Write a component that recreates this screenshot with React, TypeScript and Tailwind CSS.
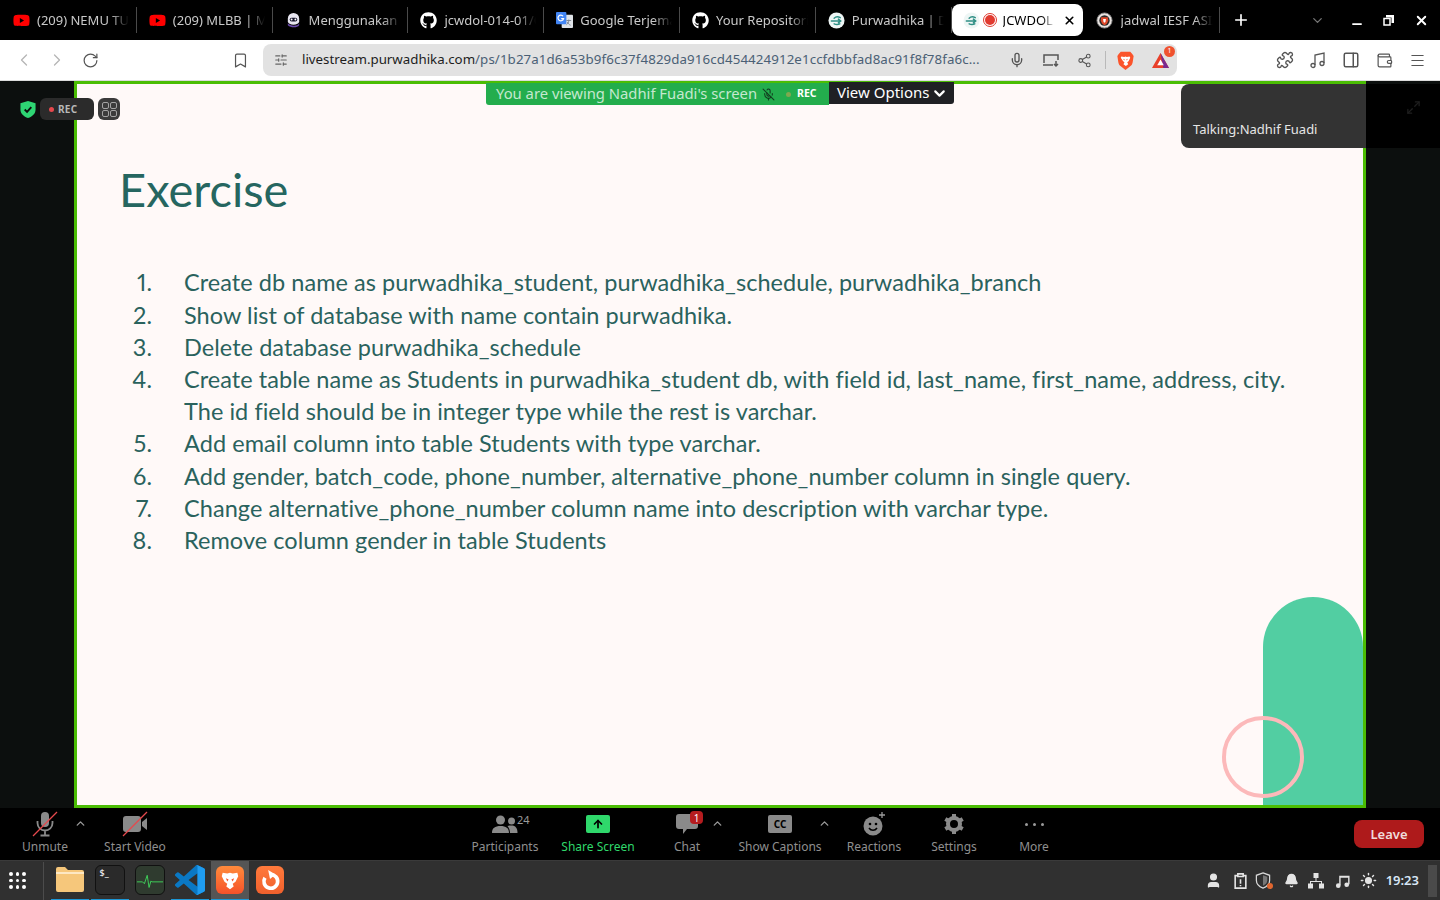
import {
  ArrowUp,
  Bell,
  Bookmark,
  ChevronDown,
  ChevronLeft,
  ChevronRight,
  ChevronUp,
  Maximize2,
  Menu,
  Mic,
  MicOff,
  Minus,
  PanelRight,
  Plus,
  Puzzle,
  RotateCw,
  Share2,
  SlidersHorizontal,
  Sun,
  User,
  Wallet,
  X,
} from "lucide-react";
import { FaGithub, FaYoutube } from "react-icons/fa";

const ui = "font-['Noto_Sans',sans-serif]";

interface Tab {
  title: string;
  icon: string;
}

const tabs: Tab[] = [
  { title: "(209) NEMU TURNAMEN", icon: "yt" },
  { title: "(209) MLBB | MPL ID", icon: "yt" },
  { title: "Menggunakan Chat", icon: "bot" },
  { title: "jcwdol-014-01/Class", icon: "gh" },
  { title: "Google Terjemahan", icon: "gt" },
  { title: "Your Repositories", icon: "gh" },
  { title: "Purwadhika | Dashboard", icon: "pw" },
];

const steps = [
  ["1.", "Create db name as purwadhika_student, purwadhika_schedule, purwadhika_branch"],
  ["2.", "Show list of database with name contain purwadhika."],
  ["3.", "Delete database purwadhika_schedule"],
  ["4.", "Create table name as Students in purwadhika_student db, with field id, last_name, first_name, address, city."],
  ["", "The id field should be in integer type while the rest is varchar."],
  ["5.", "Add email column into table Students with type varchar."],
  ["6.", "Add gender, batch_code, phone_number, alternative_phone_number column in single query."],
  ["7.", "Change alternative_phone_number column name into description with varchar type."],
  ["8.", "Remove column gender in table Students"],
];

function PurwadhikaIcon() {
  return (
    <svg viewBox="0 0 18 18" className="h-[17px] w-[17px] shrink-0">
      <circle cx="9" cy="9" r="8.5" fill="#eef6f5" />
      <path d="M3.500 9.500h8M6.500 6.500c2-2 4-2 6.500-.5M6.500 12.500c2 1 4 1 6 0M11 7.500l2.500 2-2.500 2" stroke="#2f8f85" strokeWidth="1.500" fill="none" strokeLinecap="round" />
    </svg>
  );
}

function TabIcon({ kind }: { kind: string }) {
  if (kind === "yt") return <FaYoutube className="h-[17px] w-[17px] shrink-0 text-[#ff0000]" />;
  if (kind === "gh") return <FaGithub className="h-[17px] w-[17px] shrink-0 text-white" />;
  if (kind === "pw") return <PurwadhikaIcon />;
  if (kind === "gt")
    return (
      <svg viewBox="0 0 18 18" className="h-[17px] w-[17px] shrink-0">
        <rect x="6" y="3" width="12" height="14" rx="1" fill="#dfe3e8" />
        <rect x="0" y="0" width="11" height="13" rx="1" fill="#4285f4" />
        <path d="M7.500 4.500a3 3 0 1 0 .5 2.500H5.500" stroke="#fff" strokeWidth="1.300" fill="none" />
        <path d="M11 9h5M13.500 8v1c0 2-1 3.500-2.500 4.500M12 10.500c.5 1.500 2 3 3.500 3.500" stroke="#7d8590" strokeWidth="1" fill="none" />
      </svg>
    );
  return (
    <svg viewBox="0 0 18 18" className="h-[17px] w-[17px] shrink-0">
      <path d="M3 7a6 6 0 0 1 12 0v3a6 3.500 0 0 1-12 0z" fill="#e8e6f0" />
      <path d="M3 12c2 3 10 4 12 0v2c-2 3-9 3-12 0z" fill="#6d4bb0" />
      <rect x="5" y="6" width="8" height="4" rx="2" fill="#15132a" />
      <circle cx="7" cy="8" r="1" fill="#fff" />
      <circle cx="11" cy="8" r="1" fill="#fff" />
    </svg>
  );
}

function BraveShield({ className }: { className: string }) {
  return (
    <svg viewBox="0 0 24 28" className={className}>
      <path d="M5 1h14l3 3.500 2 3-1.500 9.500c-.5 3-2 4.500-4 6L12 28l-6.500-5c-2-1.500-3.500-3-4-6L0 7.500l2-3z" fill="#fb542b" />
      <path d="M6 8l4 1 2-1 2 1 4-1 1 2-2.500 5-2 1.500 1.500 3-3.500 2.500-3.500-2.500 1.500-3-2-1.500L5 10z" fill="#fff" />
      <path d="M8.500 11.500l2.500 1-1 1.500zM15.500 11.500l-2.500 1 1 1.500z" fill="#fb542b" />
    </svg>
  );
}

function TabBar() {
  return (
    <div className={`flex h-10 items-center bg-black pl-px text-[13px] text-[#c9c9c9] ${ui}`}>
      {tabs.map((t) => (
        <div key={t.title} className="flex h-[26px] w-[135.800px] items-center border-r border-[#4a4a4a] pl-3">
          <TabIcon kind={t.icon} />
          <span className="ml-[7px] w-[92px] overflow-hidden whitespace-nowrap pt-px [mask-image:linear-gradient(to_right,black_80%,transparent)]">
            {t.title}
          </span>
        </div>
      ))}
      <div className="flex h-8 w-[131px] items-center rounded-lg bg-white pl-[11px] text-black">
        <PurwadhikaIcon />
        <span className="ml-[3px] flex h-[14px] w-[14px] shrink-0 items-center justify-center rounded-full border border-[#e13b30]">
          <span className="h-[10px] w-[10px] rounded-full bg-[#e13b30]" />
        </span>
        <span className="ml-[6px] w-[52px] overflow-hidden whitespace-nowrap pt-px [mask-image:linear-gradient(to_right,black_75%,transparent)]">
          JCWDOL 014
        </span>
        <X className="ml-[8px] h-[13px] w-[13px]" strokeWidth={3} />
      </div>
      <div className="flex h-[26px] w-[137px] items-center border-r border-[#4a4a4a] pl-[13px]">
        <svg viewBox="0 0 18 18" className="h-[17px] w-[17px] shrink-0">
          <circle cx="9" cy="9" r="8" fill="#e9e3e0" stroke="#8a8a8a" strokeWidth="1" />
          <circle cx="9" cy="9" r="5.500" fill="#2b2b2b" />
          <path d="M5.500 5.500h7l.5 3.500c-.5 2.500-2 4-4 5-2-1-3.500-2.500-4-5z" fill="#e0492a" />
          <path d="M7.500 7.500h3l-.5 3-1 1-1-1z" fill="#fff" />
        </svg>
        <span className="ml-[8px] w-[92px] overflow-hidden whitespace-nowrap pt-px [mask-image:linear-gradient(to_right,black_80%,transparent)]">
          jadwal IESF ASIA
        </span>
      </div>
      <Plus className="ml-[12px] h-[18px] w-[18px] text-white" strokeWidth={2.2} />
      <ChevronDown className="ml-[60px] h-[15px] w-[15px] text-[#777]" />
      <Minus className="ml-[25px] mt-2 h-[14px] w-[14px] text-white" strokeWidth={3} />
      <svg viewBox="0 0 12 12" className="ml-[19px] h-[12px] w-[12px]">
        <path d="M3 1h8v8H8.500V3.500H3z" fill="#fff" />
        <rect x="1" y="4.500" width="6" height="6.500" fill="none" stroke="#fff" strokeWidth="1.500" />
      </svg>
      <X className="ml-[19px] h-[15px] w-[15px] text-white" strokeWidth={3} />
    </div>
  );
}

function AddressBar() {
  return (
    <div className={`flex h-[41px] items-center border-b border-[#dcdcdc] bg-white text-[#555] ${ui}`}>
      <ChevronLeft className="ml-[14px] h-5 w-5 text-[#b5b5b5]" strokeWidth={1.5} />
      <ChevronRight className="ml-[13px] h-5 w-5 text-[#b5b5b5]" strokeWidth={1.5} />
      <RotateCw className="ml-[15px] h-[17px] w-[17px]" strokeWidth={1.7} />
      <Bookmark className="ml-[133px] h-[17px] w-[17px]" strokeWidth={1.7} />
      <div className="ml-[14px] flex h-8 w-[914px] items-center rounded-lg bg-[#e2e2e2]">
        <SlidersHorizontal className="ml-[11px] h-[14px] w-[14px] text-[#666]" />
        <div className="ml-[14px] w-[690px] overflow-hidden whitespace-nowrap text-[13.300px] tracking-[0.1px] text-[#4a6075]">
          <span className="tracking-normal text-[#1d1d1d]">livestream.purwadhika.com</span>
          /ps/1b27a1d6a53b9f6c37f4829da916cd454424912e1ccfdbbfad8ac91f8f78fa6c...
        </div>
        <Mic className="ml-[17px] h-[16px] w-[16px]" strokeWidth={2} />
        <svg viewBox="0 0 18 16" className="ml-[17px] h-[16px] w-[18px]" fill="none" stroke="#555" strokeWidth="1.500">
          <path d="M2 11V3h14v5M1 13h10M14 9v5M12 12l2 2 2-2" />
        </svg>
        <Share2 className="ml-[17px] h-[15px] w-[15px]" strokeWidth={1.7} />
        <div className="ml-[13px] h-[18px] w-px bg-[#b9b9b9]" />
        <BraveShield className="ml-[11px] h-[19px] w-[17px]" />
        <div className="relative ml-[17px]">
          <svg viewBox="0 0 20 18" className="h-[17px] w-[19px]">
            <path d="M10 1l9 16H1z" fill="#e8402a" />
            <path d="M10 1l9 16h-6z" fill="#7a2a90" />
            <path d="M10 8l3.500 6h-7z" fill="#fff" />
          </svg>
          <span className="absolute -right-[5px] -top-[6px] flex h-[11px] w-[11px] items-center justify-center rounded-full bg-[#f0522f] text-[7px] text-white">
            1
          </span>
        </div>
      </div>
      <Puzzle className="ml-[99px] h-[18px] w-[18px]" strokeWidth={1.8} />
      <svg viewBox="0 0 18 18" className="ml-[15px] h-[18px] w-[18px]" fill="none" stroke="#555" strokeWidth="1.300">
        <path d="M6 14V4l9-2v10" />
        <circle cx="4" cy="14.500" r="2" />
        <circle cx="13" cy="12.500" r="2" />
      </svg>
      <PanelRight className="ml-[15px] h-[18px] w-[18px]" strokeWidth={2} />
      <Wallet className="ml-[16px] h-[17px] w-[17px]" strokeWidth={1.7} />
      <Menu className="ml-[16px] h-[17px] w-[17px]" strokeWidth={1.5} />
    </div>
  );
}

function Slide() {
  return (
    <div className="relative h-full w-[1292px] shrink-0 overflow-hidden border-[3px] border-[#4bbd04] bg-[#fff9f8] pl-[43px] pt-[76px] font-['Lato',sans-serif] text-[#2a625d]">
      <h1 className="-ml-px text-[47px] font-normal leading-[58px] text-[#266660]">Exercise</h1>
      <ol className="mt-[49px]">
        {steps.map(([n, text]) => (
          <li key={text} className="flex h-[32.200px] items-center whitespace-nowrap text-[23.500px] tracking-[0.050px]">
            <span className="w-[32px] text-right proportional-nums">{n}</span>
            <span className="ml-[32px]">{text}</span>
          </li>
        ))}
      </ol>
      <div className="absolute bottom-0 right-0 h-[208px] w-[100px] rounded-t-[50px] bg-[#52cea2]" />
      <div className="absolute bottom-[7px] right-[59px] h-[82px] w-[82px] rounded-full border-[4px] border-[#fcb9ba]" />
    </div>
  );
}

function MeetingArea() {
  return (
    <div className={`relative flex min-h-0 flex-1 bg-[#0c0f0e] ${ui}`}>
      <div className="w-[74px] shrink-0" />
      <Slide />
      <div className="flex-1" />

      <div className="absolute left-5 top-[17px] flex items-center">
        <svg viewBox="0 0 16 18" className="h-[17px] w-4">
          <path d="M8 0l8 2.500V9c0 4.500-3.500 7.500-8 9-4.500-1.500-8-4.500-8-9V2.500z" fill="#2ed573" />
          <path d="M4.500 9l2.500 2.500 4.500-5" stroke="#0c0f0e" strokeWidth="2" fill="none" />
        </svg>
        <div className="ml-1 flex h-[22px] w-[54px] items-center rounded-md bg-[#2b2b2b] pl-[9px] text-[10px] font-bold tracking-[0.3px] text-[#b8b8b8]">
          <span className="mr-[4px] h-[5px] w-[5px] rounded-full bg-[#e5484d]" />
          REC
        </div>
        <div className="ml-1 grid h-[22px] w-[22px] grid-cols-2 place-items-center rounded-md bg-[#3b3b3b] p-[3px]">
          <span className="h-[7px] w-[7px] rounded-[2px] border border-[#a3a3a3]" />
          <span className="h-[7px] w-[7px] rounded-[2px] border border-[#a3a3a3]" />
          <span className="h-[7px] w-[7px] rounded-[2px] border border-[#a3a3a3]" />
          <span className="h-[7px] w-[7px] rounded-[2px] border border-[#a3a3a3]" />
        </div>
      </div>

      <div className="absolute left-[486px] top-px flex items-start">
        <div className="mt-px flex h-[22px] w-[343px] items-center rounded-bl-[3px] bg-[#23ad4d] pb-[2px] pl-[10px] text-[14.800px] text-[#c5e8cf]">
          You are viewing Nadhif Fuadi's screen
          <MicOff className="ml-[5px] mt-[2px] h-[13px] w-[13px] text-[#123d1f]" />
          <span className="ml-[11px] mt-[2px] h-[5px] w-[5px] rounded-full bg-[#7fa84f]" />
          <span className="ml-[6px] mt-[2px] text-[10.500px] font-bold text-white">REC</span>
        </div>
        <div className="flex h-[22px] w-[125px] items-center rounded-br-[3px] bg-[#1f2024] pb-[2px] pl-2 text-[15px] text-white">
          View Options
          <ChevronDown className="ml-[2px] mt-[2px] h-[17px] w-[17px]" strokeWidth={3} />
        </div>
      </div>

      <div className="absolute right-0 top-[3px] flex h-[64px] w-[259px]">
        <div className="flex w-[185px] items-end rounded-l-lg bg-[#333333] pb-[9px] pl-3 text-[13px] text-[#e6e6e6]">
          Talking:Nadhif Fuadi
        </div>
        <div className="flex flex-1 justify-end bg-black pr-[19px] pt-[16px]">
          <Maximize2 className="h-[15px] w-[15px] text-[#1f1f1f]" />
        </div>
      </div>
    </div>
  );
}

function ToolItem({
  label,
  className,
  labelClass = "text-[#8f8f8f]",
  children,
}: {
  label: string;
  className: string;
  labelClass?: string;
  children: React.ReactNode;
}) {
  return (
    <div className={`relative flex flex-col items-center ${className}`}>
      <div className="flex h-[30px] items-center justify-center">{children}</div>
      <span className={`whitespace-nowrap text-[12px] leading-4 ${labelClass}`}>{label}</span>
    </div>
  );
}

const Caret = ({ className }: { className: string }) => (
  <ChevronUp className={`absolute top-[8px] h-[13px] w-[13px] text-[#9a9a9a] ${className}`} strokeWidth={2.5} />
);

function ZoomBar() {
  return (
    <div className={`flex h-[52px] items-start bg-black pt-[1px] ${ui}`}>
      <ToolItem label="Unmute" className="w-[90px]">
        <svg viewBox="0 0 26 26" className="h-[26px] w-[26px]">
          <rect x="9" y="1" width="8" height="15" rx="4" fill="#8a8a8a" />
          <path d="M5.500 10v2a7.500 7.500 0 0 0 15 0v-2M13 20v4M8.500 24.500h9" stroke="#8a8a8a" strokeWidth="1.800" fill="none" />
          <path d="M1 25L25 1" stroke="#e5484d" strokeWidth="1.200" />
        </svg>
        <Caret className="left-[74px]" />
      </ToolItem>
      <ToolItem label="Start Video" className="w-[90px]">
        <svg viewBox="0 0 26 26" className="h-[26px] w-[26px]">
          <rect x="1" y="5" width="18" height="16" rx="3" fill="#8a8a8a" />
          <path d="M20 11l5-4v12l-5-4z" fill="#8a8a8a" />
          <path d="M1 25L25 1" stroke="#e5484d" strokeWidth="1.200" />
        </svg>
      </ToolItem>

      <ToolItem label="Participants" className="ml-[278px] w-[94px]">
        <svg viewBox="0 0 26 18" className="h-[18px] w-[26px]" fill="#8a8a8a">
          <circle cx="8.500" cy="5" r="4.500" />
          <circle cx="19.500" cy="6" r="3.500" />
          <path d="M0 18c0-5 3-7 8.500-7s8.500 2 8.500 7zM18 18c0-3-1-5-2.500-7 1-.5 2.500-.5 4-.5 4 0 6 2.500 6 7.500z" />
        </svg>
        <span className="absolute left-[59px] top-[3px] text-[11px] text-[#9a9a9a]">24</span>
      </ToolItem>
      <ToolItem label="Share Screen" className="w-[92px]" labelClass="text-[#2fd86b]">
        <div className="flex h-[18px] w-[24px] items-center justify-center rounded-[2px] bg-[#2fd86b]">
          <ArrowUp className="h-[12px] w-[12px] text-black" strokeWidth={3.500} />
        </div>
      </ToolItem>
      <ToolItem label="Chat" className="w-[86px]">
        <svg viewBox="0 0 22 20" className="h-[20px] w-[22px]" fill="#8a8a8a">
          <path d="M3 0h16a3 3 0 0 1 3 3v9a3 3 0 0 1-3 3h-8l-4 5v-5H3a3 3 0 0 1-3-3V3a3 3 0 0 1 3-3z" />
        </svg>
        <span className="absolute left-[46px] top-[2px] flex h-[13px] w-[13px] items-center justify-center rounded-[4px] bg-[#b51c1f] text-[10px] leading-none text-white">
          1
        </span>
        <Caret className="left-[67px]" />
      </ToolItem>
      <ToolItem label="Show Captions" className="w-[100px]">
        <div className="flex h-[18px] w-[24px] items-center justify-center rounded-[2px] bg-[#8a8a8a] text-[10px] font-bold leading-none text-black">
          CC
        </div>
        <Caret className="left-[88px]" />
      </ToolItem>
      <ToolItem label="Reactions" className="ml-[4px] w-[80px]">
        <svg viewBox="0 0 24 24" className="h-[24px] w-[24px]">
          <circle cx="11" cy="14" r="9.500" fill="#8a8a8a" />
          <circle cx="8" cy="12" r="1.300" />
          <circle cx="14" cy="12" r="1.300" />
          <path d="M7 16c2 3 6 3 8 0" stroke="#000" strokeWidth="1.500" fill="none" />
          <path d="M20 0v6M17 3h6" stroke="#9a9a9a" strokeWidth="1.300" />
        </svg>
      </ToolItem>
      <ToolItem label="Settings" className="w-[80px]">
        <svg viewBox="0 0 20 20" className="h-[20px] w-[20px]">
          <circle cx="10" cy="10" r="6" fill="none" stroke="#8a8a8a" strokeWidth="4" />
          <path d="M10 0v4M10 16v4M1.300 5l3.500 2M15.200 13l3.500 2M1.300 15l3.500-2M15.200 7l3.500-2" stroke="#8a8a8a" strokeWidth="4" />
        </svg>
      </ToolItem>
      <ToolItem label="More" className="w-[80px]">
        <div className="flex gap-[5px]">
          <span className="h-[3px] w-[3px] rounded-full bg-[#9a9a9a]" />
          <span className="h-[3px] w-[3px] rounded-full bg-[#9a9a9a]" />
          <span className="h-[3px] w-[3px] rounded-full bg-[#9a9a9a]" />
        </div>
      </ToolItem>

      <button className="ml-[280px] mt-[11px] flex h-[28px] w-[70px] items-center justify-center rounded-lg bg-[#ae1a1b] pt-px text-[13px] font-semibold text-[#f0dcdc]">
        Leave
      </button>
    </div>
  );
}

function Dock({ active, on, children }: { active?: boolean; on?: boolean; children: React.ReactNode }) {
  return (
    <div className={`mr-[2px] flex h-10 w-[38px] items-center justify-center border-b-[2px] ${on ? "border-[#1c97d6]" : "border-transparent"} ${active ? "bg-[#555555]" : ""}`}>
      {children}
    </div>
  );
}

function Taskbar() {
  const dots = Array.from({ length: 9 });
  return (
    <div className={`flex h-10 items-center border-t border-[#3a3a3a] bg-[#303030] ${ui}`}>
      <div className="ml-[9px] grid grid-cols-3 gap-[3px]">
        {dots.map((_, i) => (
          <span key={i} className="h-[3.500px] w-[3.500px] rounded-full bg-white" />
        ))}
      </div>
      <div className="ml-[17px] mr-[7px] h-[38px] w-px bg-[#4c4c4c]" />
      <Dock on>
        <svg viewBox="0 0 28 25" className="h-[25px] w-[28px]">
          <path d="M0 2a2 2 0 0 1 2-2h7l3 3h14a2 2 0 0 1 2 2v18a2 2 0 0 1-2 2H2a2 2 0 0 1-2-2z" fill="#f6c77b" />
          <rect x="0" y="5" width="28" height="2" fill="#fde8c4" />
        </svg>
      </Dock>
      <Dock on>
        <div className="h-[30px] w-[30px] rounded-md border border-[#111] bg-[#2a2a2a] pl-1 text-[9px] leading-[14px] text-white">$_</div>
      </Dock>
      <Dock>
        <div className="h-[30px] w-[30px] rounded-md border border-[#111] bg-[#2f3b2f]">
          <svg viewBox="0 0 30 30" className="h-full w-full" fill="none" stroke="#3fd45a" strokeWidth="1">
            <path d="M1 17h6l2 2 3-9 2 13 2-7 1 1h12" />
          </svg>
        </div>
      </Dock>
      <Dock on>
        <svg viewBox="0 0 24 24" className="h-[30px] w-[30px]">
          <path d="M23.150 2.587L18.210.21a1.494 1.494 0 0 0-1.705.29l-9.460 8.630-4.120-3.128a.999.999 0 0 0-1.276.057L.327 7.261A1 1 0 0 0 .326 8.740L3.899 12 .326 15.260a1 1 0 0 0 .001 1.479L1.650 17.940a.999.999 0 0 0 1.276.057l4.120-3.128 9.460 8.630a1.492 1.492 0 0 0 1.704.29l4.942-2.377A1.500 1.500 0 0 0 24 20.060V3.939a1.500 1.500 0 0 0-.850-1.352zm-5.146 14.861L10.826 12l7.178-5.448v10.896z" fill="#0a78c4" />
          <path d="M16.500.5a1.490 1.490 0 0 1 1.710-.29l4.940 2.377A1.500 1.500 0 0 1 24 3.939v16.120a1.500 1.500 0 0 1-.850 1.353l-4.942 2.377a1.492 1.492 0 0 1-1.704-.29c.6.500 1.500.100 1.500-.7V1.200c0-.8-.900-1.200-1.500-.7z" fill="#1f9cf0" />
        </svg>
      </Dock>
      <Dock on active>
        <div className="flex h-[28px] w-[28px] items-center justify-center rounded-md bg-gradient-to-b from-[#ff8a3c] to-[#f5512a]">
          <svg viewBox="0 0 24 24" className="h-[22px] w-[22px]">
            <path d="M4 4l5 1 3-1 3 1 5-1 1 4-3 6-3 2 1 3-4 3-4-3 1-3-3-2-3-6z" fill="#fff" />
            <path d="M7.500 10l3 1.500-1.500 2zM16.500 10l-3 1.500 1.500 2z" fill="#f5512a" />
          </svg>
        </div>
      </Dock>
      <Dock>
        <div className="flex h-[28px] w-[28px] items-center justify-center rounded-md bg-gradient-to-b from-[#ff7a3c] to-[#f0602c]">
          <svg viewBox="0 0 24 24" className="h-[22px] w-[22px]" fill="none">
            <path d="M6.500 9.500a7.500 7.500 0 1 0 6-3.500" stroke="#fff" strokeWidth="4" />
            <path d="M10 1l8 5-6 5z" fill="#fff" />
          </svg>
        </div>
      </Dock>

      <div className="flex-1" />
      <div className="flex items-center text-[#e4e4e4]">
        <User className="-ml-px h-[17px] w-[17px] fill-[#e4e4e4]" />
        <svg viewBox="0 0 16 18" className="ml-[11px] h-[16px] w-[15px]" fill="none" stroke="#e4e4e4" strokeWidth="1.800">
          <path d="M5 3H2v14h12V3h-3M5 1h6v3H5zM8 7v5M8 13.500v1.500" />
        </svg>
        <div className="relative ml-[7px]">
          <svg viewBox="0 0 16 18" className="h-[17px] w-[16px]">
            <path d="M8 1l7 2.500V9c0 4-3 6.500-7 8-4-1.500-7-4-7-8V3.500z" fill="none" stroke="#d9d9d9" strokeWidth="1.300" />
            <path d="M8 3.500l4.500 1.500V9c0 2.500-2 4.500-4.500 5.500z" fill="#777" />
          </svg>
          <span className="absolute bottom-0 right-[-2px] h-[6px] w-[6px] rounded-full bg-[#e0662f]" />
        </div>
        <Bell className="ml-[13px] h-[15px] w-[15px] fill-[#e4e4e4]" />
        <svg viewBox="0 0 16 16" className="ml-[9px] h-[16px] w-[16px]" fill="#e4e4e4">
          <rect x="5.500" y="0" width="5" height="5" />
          <rect x="0" y="10.500" width="5" height="5" />
          <rect x="11" y="10.500" width="5" height="5" />
          <path d="M7.500 5h1v3h5.500v3h-1V9H3v2H2V8h5.500z" />
        </svg>
        <svg viewBox="0 0 16 16" className="ml-[11px] h-[15px] w-[15px]" fill="#e4e4e4">
          <path d="M4.500 3h11v9h-1.500V5h-8v8h-1.500z" />
          <circle cx="3.500" cy="13.500" r="2.500" />
          <circle cx="12.500" cy="12.500" r="2.500" />
        </svg>
        <Sun className="ml-[10px] h-[17px] w-[17px] fill-[#e4e4e4]" />
        <span className="ml-[9px] text-[13px] font-semibold text-[#d6e6f5]">19:23</span>
        <div className="ml-[9px] mr-[3px] h-8 w-[9px] bg-[#4a4a4a]" />
      </div>
    </div>
  );
}

export default function App() {
  return (
    <div className="flex h-[900px] w-[1440px] flex-col overflow-hidden">
      <TabBar />
      <AddressBar />
      <MeetingArea />
      <ZoomBar />
      <Taskbar />
    </div>
  );
}
